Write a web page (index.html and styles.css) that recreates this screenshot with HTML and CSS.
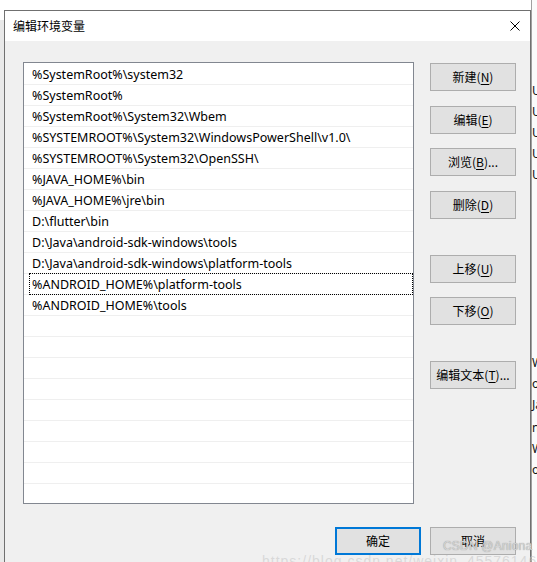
FILE: index.html
```html
<!DOCTYPE html>
<html lang="zh-CN">
<head>
<meta charset="utf-8">
<title>编辑环境变量</title>
<link rel="stylesheet" href="styles.css">
</head>
<body>
<div class="desktop">
  <div class="bg-left"></div>
  <div class="bg-right">
    <span class="frag f1">U</span><span class="frag f2">U</span><span class="frag f3">U</span><span class="frag f4">U</span><span class="frag f5">U</span>
    <span class="frag f6">W</span><span class="frag f7">os</span><span class="frag f8">Ja</span><span class="frag f9">nc</span><span class="frag f10">W</span><span class="frag f11">oN</span>
  </div>

  <div class="dialog">
    <div class="titlebar">
      <span class="title">编辑环境变量</span>
      <svg class="close" width="10" height="10" viewBox="0 0 10 10"><path d="M0.5 0.5L9.5 9.5M9.5 0.5L0.5 9.5" stroke="#000" stroke-width="1"/></svg>
    </div>
    <div class="body">
      <div class="main">
        <div class="list">
          <div class="row">%SystemRoot%\system32</div>
          <div class="row">%SystemRoot%</div>
          <div class="row">%SystemRoot%\System32\Wbem</div>
          <div class="row">%SYSTEMROOT%\System32\WindowsPowerShell\v1.0\</div>
          <div class="row">%SYSTEMROOT%\System32\OpenSSH\</div>
          <div class="row">%JAVA_HOME%\bin</div>
          <div class="row">%JAVA_HOME%\jre\bin</div>
          <div class="row">D:\flutter\bin</div>
          <div class="row">D:\Java\android-sdk-windows\tools</div>
          <div class="row">D:\Java\android-sdk-windows\platform-tools</div>
          <div class="row focus">%ANDROID_HOME%\platform-tools</div>
          <div class="row">%ANDROID_HOME%\tools</div>
          <div class="row"></div><div class="row"></div><div class="row"></div><div class="row"></div>
          <div class="row"></div><div class="row"></div><div class="row"></div><div class="row"></div>
          <div class="row"></div><div class="row"></div>
        </div>
        <div class="side">
          <button class="btn">新建(<u>N</u>)</button>
          <button class="btn g15">编辑(<u>E</u>)</button>
          <button class="btn g14">浏览(<u>B</u>)...</button>
          <button class="btn g15">删除(<u>D</u>)</button>
          <button class="btn g36">上移(<u>U</u>)</button>
          <button class="btn g14">下移(<u>O</u>)</button>
          <button class="btn g36">编辑文本(<u>T</u>)...</button>
        </div>
      </div>
      <div class="footer">
        <button class="btn default">确定</button>
        <button class="btn">取消</button>
      </div>
    </div>
  </div>

  <div class="wm-csdn">CSDN @Aniona</div>
  <div class="wm-url">https://blog.csdn.net/weixin_45576146</div>
</div>
</body>
</html>
```

FILE: styles.css
```css
* { box-sizing: border-box; }
html, body { margin: 0; padding: 0; }
body {
  width: 537px;
  height: 562px;
  overflow: hidden;
  background: #ffffff;
  font-family: "Noto Sans", "Noto Sans CJK SC", sans-serif;
  font-size: 12px;
  color: #000;
}
.desktop {
  position: relative;
  width: 537px;
  height: 562px;
  overflow: hidden;
  background: #ffffff;
}
.bg-left {
  position: absolute;
  left: 0; top: 20px;
  width: 6px; height: 542px;
  background: #e9e9e9;
  border-right: 1px solid #9a9a9a;
}
.bg-right {
  position: absolute;
  left: 531px; top: 0;
  width: 6px; height: 562px;
  background: #fbfbfb;
  border-left: 1px solid #a0a0a0;
  font-family: "Noto Sans", sans-serif;
  font-size: 12px;
}
.frag { position: absolute; left: 0; color: #111; line-height: 14px; }
.f1 { top: 84px; } .f2 { top: 105px; } .f3 { top: 126px; } .f4 { top: 147px; } .f5 { top: 168px; }
.f6 { top: 356px; } .f7 { top: 377px; } .f8 { top: 398px; } .f9 { top: 421px; } .f10 { top: 442px; } .f11 { top: 463px; }

.dialog {
  position: absolute;
  left: 4px; top: 10px;
  width: 527px;
  height: 560px;
  border: 1px solid #707070;
  background: #f0f0f0;
  display: flex;
  flex-direction: column;
}
.titlebar {
  height: 30px;
  background: #ffffff;
  display: flex;
  align-items: center;
  justify-content: space-between;
  padding: 0 10px 0 8px;
  flex: none;
}
.title {
  font-family: "Noto Sans CJK SC", sans-serif;
  font-size: 12px;
  color: #000;
  margin-top: -2px;
}
.close { display: block; margin-top: -1px; }

.body {
  padding: 21px 14px 0 18px;
  display: flex;
  flex-direction: column;
}
.main {
  display: flex;
  gap: 16px;
}
.list {
  width: 391px;
  height: 442px;
  border: 1px solid #828790;
  background: #fff;
  overflow: hidden;
  padding-top: 1px;
  flex: none;
}
.row {
  height: 21px;
  border-bottom: 1px solid #efefef;
  padding-left: 8px;
  line-height: 22px;
  font-family: "Noto Sans", sans-serif;
  font-size: 12.5px;
  white-space: nowrap;
  position: relative;
}
.row.focus::after {
  content: "";
  position: absolute;
  left: 5px; right: 0; top: -1px; bottom: -1px;
  border: 1px dotted #000;
}
.side {
  display: flex;
  flex-direction: column;
  padding-top: 1px;
}
.btn {
  width: 86px;
  height: 28px;
  border: 1px solid #adadad;
  background: #e1e1e1;
  font-family: "Noto Sans CJK SC", sans-serif;
  font-size: 12px;
  color: #000;
  padding: 0;
  margin: 0;
  display: flex;
  align-items: center;
  justify-content: center;
  line-height: 1;
}
.btn u { text-underline-offset: 2px; }
.g15 { margin-top: 15px; }
.g14 { margin-top: 14px; }
.g36 { margin-top: 36px; }
.footer {
  display: flex;
  justify-content: flex-end;
  gap: 9px;
  margin-top: 23px;
}
.btn.default { border: 2px solid #0078d7; }

.wm-csdn {
  position: absolute;
  left: 443px; top: 539px;
  font-family: "Liberation Sans", sans-serif;
  font-size: 12px;
  color: #d4d4d4;
  text-shadow: 0 0 1px #8a8a8a;
  letter-spacing: 0.2px;
}
.wm-url {
  position: absolute;
  left: 262px; top: 553px;
  font-family: "Liberation Sans", sans-serif;
  font-size: 14px;
  color: rgba(200,200,200,0.6);
  letter-spacing: 1px;
}
```
